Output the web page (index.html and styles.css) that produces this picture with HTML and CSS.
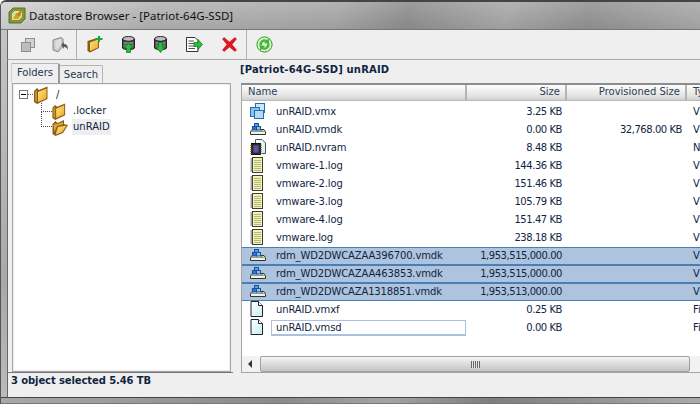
FILE: index.html
```html
<!DOCTYPE html>
<html lang="en">
<head>
  <meta charset="UTF-8" />
  <title>Datastore Browser</title>
  <link rel="stylesheet" href="styles.css">
</head>
<body>

  <svg class="defs" width="0" height="0">
    <defs>
      <linearGradient id="fold" x1="0" y1="0" x2="1" y2="1">
        <stop offset="0" stop-color="#ffe680"/>
        <stop offset="1" stop-color="#e8a92c"/>
      </linearGradient>
      <linearGradient id="page" x1="0" y1="0" x2="1" y2="1">
        <stop offset="0" stop-color="#ffffff"/>
        <stop offset="1" stop-color="#c4eef2"/>
      </linearGradient>
      <symbol id="i-folder" viewBox="0 0 14 18">
        <path d="M0 5 L3 2 L5 4 L13.5 0.5 L13.5 13 L3 18 L0 16 Z" fill="#8a5c14"/>
        <path d="M4 6 L12.5 2.5 L12.5 12.3 L4 16 Z" fill="url(#fold)"/>
        <path d="M1 5.5 L3 4 L3 16 L1 15 Z" fill="#c98f2a"/>
      </symbol>
      <symbol id="i-open" viewBox="0 0 16 17">
        <path d="M0.5 5 L3.5 2 L5.5 4 L12 1 L12 5 L16 6 L11 14 L3.5 17 L0.5 15 Z" fill="#8a5c14"/>
        <path d="M6 8 L14.5 6.5 L10.3 13 L3.5 15.7 Z" fill="url(#fold)"/>
        <path d="M1.5 6 L3.5 4 L3.5 5.5 L11 3 L11 5.5 L5 7 L2.5 13 Z" fill="#d9a441"/>
      </symbol>
      <symbol id="i-vmx" viewBox="0 0 16 16">
        <rect x="5.5" y="0.5" width="9" height="9" fill="#cfe6f8" stroke="#1f6fb8"/>
        <rect x="0.5" y="4.5" width="9" height="9" fill="#8fc2ea" stroke="#1f6fb8"/>
        <rect x="4.5" y="7.5" width="9" height="8" fill="#b7d8f2" stroke="#1f6fb8"/>
      </symbol>
      <symbol id="i-vmdk" viewBox="0 0 16 12">
        <path d="M2 6.5 H14 L15.5 8.5 V11.5 H0.5 V8.5 Z" fill="#f1f1e4" stroke="#333"/>
        <path d="M0.5 8.5 H15.5" stroke="#999"/>
        <rect x="4.5" y="0.5" width="4" height="3" fill="#5aa2e0" stroke="#1a4f9c"/>
        <rect x="2.5" y="3.5" width="4" height="3.5" fill="#2f76cf" stroke="#1a4f9c"/>
        <rect x="6.5" y="3.5" width="4" height="3.5" fill="#8fc2ea" stroke="#1a4f9c"/>
        <rect x="11" y="7" width="2" height="1.5" fill="#5fbf3a"/>
      </symbol>
      <symbol id="i-nvram" viewBox="0 0 16 16">
        <path d="M5.5 0.5 H12 L15.5 4 V14.5 H5.5 Z" fill="url(#page)" stroke="#555"/>
        <rect x="1.5" y="4.5" width="9" height="11" fill="#2c2c30" stroke="#111"/>
        <rect x="3.5" y="6.5" width="5" height="7" fill="#5a54a8"/>
        <path d="M0 6.5 H1.5 M0 8.5 H1.5 M0 10.5 H1.5 M0 12.5 H1.5 M0 14.5 H1.5 M10.5 6.5 H12 M10.5 8.5 H12 M10.5 10.5 H12 M10.5 12.5 H12 M10.5 14.5 H12" stroke="#b48a30"/>
      </symbol>
      <symbol id="i-log" viewBox="0 0 13 16">
        <rect x="2.5" y="0.5" width="10" height="15" fill="#f8f3a8" stroke="#3c3c3c"/>
        <path d="M4 3.5 H11 M4 5.5 H11 M4 7.5 H11 M4 9.5 H11 M4 11.5 H11 M4 13.5 H11" stroke="#a8b890"/>
        <path d="M0.5 2 H3 M0.5 4 H3 M0.5 6 H3 M0.5 8 H3 M0.5 10 H3 M0.5 12 H3 M0.5 14 H3" stroke="#444"/>
      </symbol>
      <symbol id="i-file" viewBox="0 0 13 16">
        <path d="M1 0.5 H8.5 L12.5 4.5 V15.5 H1 Z" fill="url(#page)" stroke="#222"/>
        <path d="M8.5 0.5 V4.5 H12.5" fill="#fff" stroke="#222"/>
      </symbol>
    </defs>
  </svg>

  <div class="window">
    <div class="titlebar">
      <svg class="logo" width="18" height="17" viewBox="0 0 18 17">
        <path d="M5 1 H17 V12 L13 16 H1 V5 Z" fill="#7f9a35" stroke="#5c7324" stroke-linejoin="round"/>
        <path d="M6 4 H14 V10 L11 13 H4 V7 Z" fill="#d7dfb8"/>
        <path d="M5 12 L8 6 H10 L9 8 H13 L10 12 Z" fill="#e59a1c"/>
        <path d="M8 8 L12 4 H14 L12 9 Z" fill="#c77f14"/>
      </svg>
      <span class="title">Datastore Browser - [Patriot-64G-SSD]</span>
    </div>

    <div class="toolbar">
      <div class="tool-group first">
        <svg class="tool" width="14" height="14" viewBox="0 0 14 14">
          <rect x="4.5" y="0.5" width="9" height="9" fill="#d2d2d2" stroke="#8e8e8e"/>
          <rect x="0.5" y="4.5" width="9" height="9" fill="#bdbdbd" stroke="#8e8e8e"/>
        </svg>
        <svg class="tool" width="17" height="16" viewBox="0 0 17 16">
          <path d="M1 3 L9 0.5 L11 2 V9 L6 15 L1 13 Z" fill="#c9c9c9" stroke="#8a8a8a"/>
          <path d="M3 4 L9 2 V8 L4 13 Z" fill="#dedede"/>
          <path d="M9 8 L12 5 V7 C15 7 16 9 16 13 C15 11 14 10 12 10 V12 Z" fill="#5d5d5d"/>
        </svg>
      </div>
      <div class="tool-group second">
        <svg class="tool" width="16" height="17" viewBox="0 0 16 17">
          <path d="M0.5 5 L10 2 L12 3 V12 L3 16.5 L0.5 15 Z" fill="#8a5c14"/>
          <path d="M3 6.5 L11 3.5 V11.5 L3 15 Z" fill="url(#fold)"/>
          <path d="M11 0 H13 V2 H15.5 V4 H13 V6 H11 V4 H8.5 V2 H11 Z" fill="#12a83a"/>
        </svg>
        <svg class="tool" width="13" height="17" viewBox="0 0 13 17">
          <ellipse cx="6.5" cy="3" rx="6" ry="2.5" fill="#bfbfbf" stroke="#222"/>
          <path d="M0.5 3 V12 C0.5 14 12.5 14 12.5 12 V3 C12.5 6 0.5 6 0.5 3 Z" fill="#555" stroke="#222"/>
          <path d="M2 7 H11 M2 10 H11" stroke="#aaa"/>
          <path d="M6.5 7 L11 12 H8.5 V16.5 H4.5 V12 H2 Z" fill="#26c03a" stroke="#0c6e1c" stroke-width="0.7"/>
        </svg>
        <svg class="tool" width="13" height="17" viewBox="0 0 13 17">
          <ellipse cx="6.5" cy="3" rx="6" ry="2.5" fill="#bfbfbf" stroke="#222"/>
          <path d="M0.5 3 V12 C0.5 14 12.5 14 12.5 12 V3 C12.5 6 0.5 6 0.5 3 Z" fill="#555" stroke="#222"/>
          <path d="M2 7 H11 M2 10 H11" stroke="#aaa"/>
          <path d="M4.5 6.5 H8.5 V11 H11 L6.5 16.5 L2 11 H4.5 Z" fill="#26c03a" stroke="#0c6e1c" stroke-width="0.7"/>
        </svg>
        <svg class="tool" width="17" height="15" viewBox="0 0 17 15">
          <path d="M0.5 0.5 H9 L12 3.5 V14.5 H0.5 Z" fill="#fff" stroke="#333"/>
          <path d="M2.5 4 H8 M2.5 6.5 H8 M2.5 9 H8 M2.5 11.5 H9" stroke="#555"/>
          <path d="M8 5.5 H12 V2.5 L16.5 7.5 L12 12.5 V9.5 H8 Z" fill="#26c03a" stroke="#0c6e1c" stroke-width="0.7"/>
        </svg>
        <svg class="tool" width="15" height="15" viewBox="0 0 15 15">
          <path d="M2 0.5 L7.5 5 L13 0.5 L14.5 2 L10 7.5 L14.5 13 L13 14.5 L7.5 10 L2 14.5 L0.5 13 L5 7.5 L0.5 2 Z" fill="#e8141c" stroke="#b00c10" stroke-width="0.5"/>
        </svg>
      </div>
      <div class="tool-group third">
        <svg class="tool" width="17" height="17" viewBox="0 0 17 17">
          <circle cx="8.5" cy="8.5" r="7.6" fill="#d8f2c0" stroke="#2f9a2a"/>
          <path d="M3.5 9 A5 5 0 0 1 11 4 L12.5 2 L13.5 8 L8 7 L9.5 5.5 A3 3 0 0 0 6 9 Z" fill="#3fb53a"/>
          <path d="M13.5 8 A5 5 0 0 1 6 13 L4.5 15 L3.5 9 L9 10 L7.5 11.5 A3 3 0 0 0 11 8 Z" fill="#3fb53a"/>
        </svg>
      </div>
    </div>

    <div class="main">
      <div class="side">
        <div class="tabs">
          <div class="tab active">Folders</div>
          <div class="tab">Search</div>
        </div>
        <div class="tree">
          <div class="tree-row root">
            <span class="minus"></span>
            <span class="dots-h"></span>
            <svg class="fold" width="14" height="18"><use href="#i-folder"/></svg>
            <span class="tree-label slash">/</span>
          </div>
          <div class="tree-row child">
            <span class="elbow first-elbow"></span>
            <svg class="fold" width="14" height="17"><use href="#i-folder"/></svg>
            <span class="tree-label">.locker</span>
          </div>
          <div class="tree-row child">
            <span class="elbow"></span>
            <svg class="fold" width="16" height="17"><use href="#i-open"/></svg>
            <span class="tree-label picked">unRAID</span>
          </div>
        </div>
      </div>

      <div class="files">
        <h1 class="path">[Patriot-64G-SSD] unRAID</h1>
        <div class="list">
          <div class="cols head">
            <div>Name</div>
            <div class="num">Size</div>
            <div class="num">Provisioned Size</div>
            <div>Type</div>
          </div>
          <div class="rows" id="rows"></div>
          <div class="hscroll">
            <div class="arrow"></div>
            <div class="thumb"><span class="grip"></span></div>
          </div>
        </div>
      </div>
    </div>

    <div class="status">3 object selected 5.46 TB</div>
    <div class="frame-bottom"></div>
  </div>

  <script>
    const files = [
      ['i-vmx', 'unRAID.vmx', '3.25 KB', '', 'V'],
      ['i-vmdk', 'unRAID.vmdk', '0.00 KB', '32,768.00 KB', 'V'],
      ['i-nvram', 'unRAID.nvram', '8.48 KB', '', 'N'],
      ['i-log', 'vmware-1.log', '144.36 KB', '', 'V'],
      ['i-log', 'vmware-2.log', '151.46 KB', '', 'V'],
      ['i-log', 'vmware-3.log', '105.79 KB', '', 'V'],
      ['i-log', 'vmware-4.log', '151.47 KB', '', 'V'],
      ['i-log', 'vmware.log', '238.18 KB', '', 'V'],
      ['i-vmdk', 'rdm_WD2DWCAZAA396700.vmdk', '1,953,515,000.00', '', 'V', 'sel'],
      ['i-vmdk', 'rdm_WD2DWCAZAA463853.vmdk', '1,953,515,000.00', '', 'V', 'sel'],
      ['i-vmdk', 'rdm_WD2DWCAZA1318851.vmdk', '1,953,513,000.00', '', 'V', 'sel'],
      ['i-file', 'unRAID.vmxf', '0.25 KB', '', 'Fi'],
      ['i-file', 'unRAID.vmsd', '0.00 KB', '', 'Fi', 'edit']
    ];

    const sizes = { 'i-vmx': [16, 16], 'i-vmdk': [16, 12], 'i-nvram': [16, 16], 'i-log': [13, 16], 'i-file': [13, 16] };

    document.getElementById('rows').innerHTML = files.map(f => {
      const [w, h] = sizes[f[0]];
      return `
        <div class="cols row ${f[5] || ''}">
          <div class="name">
            <span class="icon"><svg width="${w}" height="${h}"><use href="#${f[0]}"/></svg></span>
            <span class="fname">${f[1]}</span>
          </div>
          <div class="num">${f[2]}</div>
          <div class="num">${f[3]}</div>
          <div>${f[4]}</div>
        </div>`;
    }).join('');
  </script>
</body>
</html>
```

FILE: styles.css
```css
* {
  margin: 0;
  padding: 0;
  box-sizing: border-box;
}

html, body {
  width: 700px;
  height: 404px;
  overflow: hidden;
  background: #fff;
}

body {
  font-family: 'DejaVu Sans', 'Noto Sans', sans-serif;
  font-size: 10px;
  color: #10253f;
}

.defs {
  position: absolute;
}

.window {
  width: 700px;
  height: 404px;
  display: flex;
  flex-direction: column;
  overflow: hidden;
  border-left: 1px solid #555;
  border-top: 2px solid #444;
  border-top-left-radius: 6px;
  background: linear-gradient(to bottom, #c8c8c8, #a8a8a8 70%, #bcbcbc);
}

/* title bar, aero glass look */
.titlebar {
  height: 28px;
  flex: none;
  display: flex;
  align-items: center;
  padding-left: 7px;
  border-bottom: 1px solid #777;
  background:
    linear-gradient(to bottom, rgba(255,255,255,0.12), rgba(0,0,0,0.06)),
    linear-gradient(100deg, #d4d4d4 0, #b4b4b4 22%, #a8a8a8 48%, #8f8f8f 58%, #a9a9a9 72%, #939393 84%, #aaaaaa 100%);
}

.title {
  font-family: 'Noto Sans', sans-serif;
  font-size: 11.5px;
  margin-left: 3px;
  color: #111;
}

.toolbar {
  height: 30px;
  flex: none;
  margin-left: 6px;
  display: flex;
  border-left: 1px solid #666;
  border-bottom: 1px solid #a8a8a8;
  background: #efefef;
}

.tool-group {
  display: flex;
  align-items: center;
  height: 100%;
  border-right: 1px solid #b0b0b0;
}

.tool-group.first {
  width: 69px;
  padding-left: 13px;
  gap: 17px;
}

.tool-group.second {
  width: 170px;
  padding-left: 10px;
  gap: 19px;
}

.tool-group.third {
  border-right: none;
  padding-left: 9px;
}

.tool {
  flex: none;
}

.main {
  flex: 1;
  min-height: 0;
  margin-left: 6px;
  display: flex;
  border-left: 1px solid #666;
  background: #efefef;
}

.side {
  width: 225px;
  flex: none;
  padding-left: 2px;
  display: flex;
  flex-direction: column;
  border-bottom: 1px solid #777;
}

.tabs {
  height: 23px;
  flex: none;
  display: flex;
  align-items: flex-end;
  padding-left: 1px;
}

.tab {
  height: 18px;
  width: 43px;
  text-align: center;
  line-height: 18px;
  background: #efefef;
  border: 1px solid #b5b5b5;
  border-bottom: none;
  border-left: none;
  border-top-right-radius: 2px;
  color: #22384f;
}

.tab.active {
  height: 20px;
  width: 49px;
  line-height: 17px;
  border-left: 1px solid #d0d0d0;
  border-right: 2px solid #9a9a9a;
}

.tree {
  flex: 1;
  margin-left: 2px;
  width: 219px;
  background: #fff;
  border: 2px solid #eeeeee;
  outline: 1px solid #a4a4a4;
  outline-offset: -1px;
  padding: 1px 0 0 5px;
}

.tree-row {
  display: flex;
  align-items: center;
  height: 16px;
}

.tree-row.root {
  height: 17px;
}

.minus {
  width: 9px;
  height: 9px;
  flex: none;
  border: 1px solid #777;
  background: linear-gradient(#000, #000) center / 5px 1px no-repeat #fff;
}

.dots-h {
  width: 5px;
  margin-right: 1px;
  border-top: 1px dotted #555;
}

.tree-row.child {
  padding-left: 22px;
}

.elbow {
  width: 11px;
  height: 16px;
  flex: none;
  align-self: flex-start;
  margin-top: -8px;
  border-left: 1px dotted #444;
  border-bottom: 1px dotted #444;
}

.first-elbow {
  height: 9px;
  margin-top: 0;
}

.tree-label {
  margin-left: 7px;
  margin-bottom: 1px;
  color: #10253f;
}

.tree-label.slash {
  margin-left: 8px;
}

.tree-label.picked {
  margin-left: 4px;
  margin-bottom: 0;
  padding: 0 1px;
  background: #eeeeee;
  height: 16px;
  line-height: 15px;
}

.files {
  flex: 1;
  min-width: 0;
  margin-left: 8px;
  display: flex;
  flex-direction: column;
}

.path {
  height: 23px;
  flex: none;
  margin-left: -1px;
  font-size: 10px;
  font-weight: 700;
  line-height: 20px;
  letter-spacing: 0.15px;
  color: #10253f;
}

.list {
  flex: 1;
  min-height: 0;
  display: flex;
  flex-direction: column;
  background: #fff;
  border-top: 2px solid #8c8c8c;
  border-left: 1px solid #a4a4a4;
  border-bottom: 1px solid #a4a4a4;
}

.cols {
  display: grid;
  grid-template-columns: 225px 100px 120px 100px;
  width: 545px;
}

.cols .num {
  text-align: right;
  padding-right: 5px;
}

.head {
  height: 16px;
  flex: none;
  line-height: 14px;
  border-bottom: 1px solid #bbb;
  background: linear-gradient(to bottom, #fdfdfd, #e2e2e2 75%, #cfcfcf);
  color: #2e3f52;
}

.head > div {
  padding-left: 6px;
  border-right: 2px solid #b4b4b4;
}

.head > div:last-child {
  border-right: none;
}

.rows {
  flex: 1;
  min-height: 0;
  padding-top: 2px;
  overflow: hidden;
}

.row {
  height: 18px;
  line-height: 17px;
}

.row .fname {
  letter-spacing: -0.15px;
}

.row .num {
  letter-spacing: -0.45px;
}

.row > div:last-child {
  padding-left: 6px;
}

.row.sel {
  background: #adc3de;
  box-shadow: inset 0 1px #4a7fb5, inset 0 -1px #4a7fb5;
}

.name {
  display: flex;
  align-items: flex-start;
}

.icon {
  width: 34px;
  height: 16px;
  flex: none;
  display: flex;
  align-items: center;
  padding-left: 8px;
}

.edit .fname {
  width: 195px;
  height: 16px;
  margin: 1px 0 0 -5px;
  padding-left: 4px;
  line-height: 14px;
  border: 1px solid #a9c1e0;
  box-shadow: inset 0 -2px 0 -1px #a9c1e0;
}

.hscroll {
  height: 16px;
  flex: none;
  display: flex;
  background: #f2f2f2;
}

.arrow {
  width: 18px;
  flex: none;
  position: relative;
}

.arrow::after {
  content: "";
  position: absolute;
  left: 6px;
  top: 4px;
  border: 4px solid transparent;
  border-left: none;
  border-right-color: #333;
}

.thumb {
  width: 430px;
  flex: none;
  display: flex;
  align-items: center;
  justify-content: center;
  border: 1px solid #a0a0a0;
  border-radius: 2px;
  background: linear-gradient(to bottom, #f6f6f6, #dcdcdc 50%, #c4c4c4);
}

.grip {
  width: 9px;
  height: 7px;
  background: repeating-linear-gradient(to right, #666 0, #666 1px, #e8e8e8 1px, #e8e8e8 2px);
}

.status {
  height: 24px;
  flex: none;
  margin-left: 6px;
  padding: 2px 0 0 3px;
  border-left: 1px solid #666;
  font-weight: 700;
  letter-spacing: -0.1px;
  background: #efefef;
  color: #10253f;
}

.frame-bottom {
  height: 7px;
  flex: none;
  border-top: 1px solid #444;
  border-bottom: 1px solid #777;
  background: linear-gradient(90deg, #a8a8a8 0, #8a8a8a 40%, #a4a4a4 55%, #7e7e7e 70%, #aaaaaa 100%);
}
```
